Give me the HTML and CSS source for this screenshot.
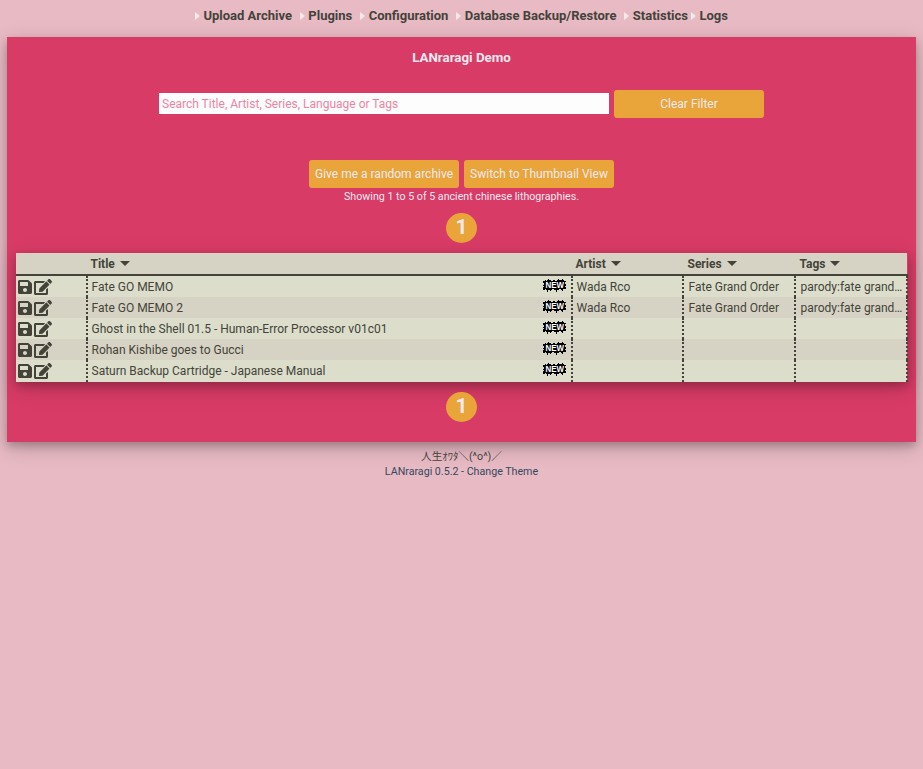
FILE: index.html
```
<!DOCTYPE html>
<html lang="en">
<head>
<meta charset="utf-8">
<title>LANraragi Demo</title>
<link rel="stylesheet" href="styles.css">
</head>
<body>
<svg class="defs" width="0" height="0">
  <symbol id="save" viewBox="0 0 448 512"><path d="M433.941 129.941l-83.882-83.882A48 48 0 0 0 316.118 32H48C21.49 32 0 53.49 0 80v352c0 26.51 21.49 48 48 48h352c26.51 0 48-21.49 48-48V163.882a48 48 0 0 0-14.059-33.941zM224 416c-35.346 0-64-28.654-64-64 0-35.346 28.654-64 64-64s64 28.654 64 64c0 35.346-28.654 64-64 64zm96-304.52V212c0 6.627-5.373 12-12 12H76c-6.627 0-12-5.373-12-12V108c0-6.627 5.373-12 12-12h228.52c3.183 0 6.235 1.264 8.485 3.515l3.48 3.48A11.996 11.996 0 0 1 320 111.48z"/></symbol>
  <symbol id="edit" viewBox="0 0 576 512"><path d="M402.6 83.2l90.2 90.2c3.8 3.8 3.8 10 0 13.8L274.4 405.6l-92.8 10.3c-12.4 1.4-22.9-9.1-21.5-21.5l10.3-92.8L388.8 83.2c3.8-3.8 10-3.8 13.8 0zm162-22.9l-48.8-48.8c-15.2-15.2-39.9-15.2-55.2 0l-35.4 35.4c-3.8 3.8-3.8 10 0 13.8l90.2 90.2c3.8 3.8 10 3.8 13.8 0l35.4-35.4c15.2-15.3 15.2-40 0-55.2zM384 346.2V448H64V128h229.8c3.2 0 6.2-1.3 8.5-3.5l40-40c7.6-7.6 2.2-20.5-8.5-20.5H48C21.5 64 0 85.5 0 112v352c0 26.5 21.5 48 48 48h352c26.5 0 48-21.5 48-48V306.2c0-10.7-12.9-16-20.5-8.5l-40 40c-2.2 2.3-3.5 5.3-3.5 8.5z"/></symbol>
  <symbol id="burst" viewBox="0 0 23 13"><path shape-rendering="crispEdges" d="M0 2H2V1H3V2H4V1H5V0H6V1H8V2H10V1H12V2H14V1H15V0H16V1H19V0H20V1H21V2H23V3H22V5H23V7H22V8H23V10H20V12H19V11H18V10H16V11H14V13H13V11H11V10H9V11H8V12H7V11H5V13H4V11H3V10H2V11H0V8H1V7H0V6H1V4H0Z"/></symbol>
</svg>
<nav class="menu">
  <a>Upload Archive</a><a>Plugins</a><a>Configuration</a><a>Database Backup/Restore</a><a>Statistics</a><a>Logs</a>
</nav>
<main class="panel">
  <h1>LANraragi Demo</h1>
  <div class="search">
    <input type="text" placeholder="Search Title, Artist, Series, Language or Tags">
    <button>Clear Filter</button>
  </div>
  <div class="actions">
    <button>Give me a random archive</button>
    <button>Switch to Thumbnail View</button>
  </div>
  <p class="info">Showing 1 to 5 of 5 ancient chinese lithographies.</p>
  <div class="page">1</div>
  <table>
    <colgroup><col class="c-icons"><col class="c-title"><col class="c-artist"><col class="c-series"><col class="c-tags"></colgroup>
    <thead><tr><th></th><th>Title<i></i></th><th>Artist<i></i></th><th>Series<i></i></th><th>Tags<i></i></th></tr></thead>
    <tbody>
      <tr><td><div class="icons"><svg class="save"><use href="#save"/></svg><svg class="edit"><use href="#edit"/></svg></div></td><td><div class="name">Fate GO MEMO<svg class="new"><use href="#burst" width="23" height="13"/><text x="2.5" y="9" textLength="18.5" lengthAdjust="spacingAndGlyphs">NEW</text></svg></div></td><td>Wada Rco</td><td>Fate Grand Order</td><td>parody:fate grand…</td></tr>
      <tr><td><div class="icons"><svg class="save"><use href="#save"/></svg><svg class="edit"><use href="#edit"/></svg></div></td><td><div class="name">Fate GO MEMO 2<svg class="new"><use href="#burst" width="23" height="13"/><text x="2.5" y="9" textLength="18.5" lengthAdjust="spacingAndGlyphs">NEW</text></svg></div></td><td>Wada Rco</td><td>Fate Grand Order</td><td>parody:fate grand…</td></tr>
      <tr><td><div class="icons"><svg class="save"><use href="#save"/></svg><svg class="edit"><use href="#edit"/></svg></div></td><td><div class="name">Ghost in the Shell 01.5 - Human-Error Processor v01c01<svg class="new"><use href="#burst" width="23" height="13"/><text x="2.5" y="9" textLength="18.5" lengthAdjust="spacingAndGlyphs">NEW</text></svg></div></td><td></td><td></td><td></td></tr>
      <tr><td><div class="icons"><svg class="save"><use href="#save"/></svg><svg class="edit"><use href="#edit"/></svg></div></td><td><div class="name">Rohan Kishibe goes to Gucci<svg class="new"><use href="#burst" width="23" height="13"/><text x="2.5" y="9" textLength="18.5" lengthAdjust="spacingAndGlyphs">NEW</text></svg></div></td><td></td><td></td><td></td></tr>
      <tr><td><div class="icons"><svg class="save"><use href="#save"/></svg><svg class="edit"><use href="#edit"/></svg></div></td><td><div class="name">Saturn Backup Cartridge - Japanese Manual<svg class="new"><use href="#burst" width="23" height="13"/><text x="2.5" y="9" textLength="18.5" lengthAdjust="spacingAndGlyphs">NEW</text></svg></div></td><td></td><td></td><td></td></tr>
    </tbody>
  </table>
  <div class="page">1</div>
</main>
<footer>
  <p>人生ｵﾜﾀ＼(^o^)／</p>
  <p class="version">LANraragi 0.5.2 - Change Theme</p>
</footer>
</body>
</html>
```
FILE: styles.css
```
* { box-sizing: border-box; }
body {
  margin: 0;
  background: #e8bac4;
  color: #43433a;
  font: 12px/15px Roboto, "Noto Sans CJK JP", sans-serif;
}
.defs { position: absolute; }
.menu {
  display: flex;
  align-items: flex-start;
  height: 37px;
  padding: 8px 0 0 195px;
  font-size: 13px;
  font-weight: bold;
  line-height: 16px;
  white-space: nowrap;
}
.menu a { display: flex; align-items: center; margin-right: 8px; }
.menu a:nth-child(5) { margin-right: 3px; }
.menu a::before {
  content: "";
  border: solid transparent;
  border-width: 4px 0 4px 5px;
  border-left-color: #f2e9e9;
  margin-right: 3.4px;
}
.panel {
  width: 909px;
  height: 405px;
  margin: 0 7px;
  padding: 13px 9px 0;
  background: #d83b66;
  color: #f2e9f0;
  box-shadow: 0 4px 8px rgba(0,0,0,.2), 0 6px 20px rgba(0,0,0,.19);
}
h1 { margin: 0 0 25px; font-size: 10pt; line-height: 15px; text-align: center; }
.search, .actions { display: flex; justify-content: center; align-items: center; gap: 5px; height: 28px; }
.search { margin-bottom: 42px; }
input {
  width: 450px;
  height: 21px;
  margin: 0 0 1px;
  border: 0;
  padding: 1px 3px;
  background: #fdfdfd;
  font: 12px Roboto, sans-serif;
}
input::placeholder { color: #f0849f; opacity: 1; }
button {
  width: 150px;
  height: 28px;
  padding: 0;
  border: 0;
  border-radius: 3px;
  background: #e9a43a;
  color: #f2e9f0;
  font: 12px Roboto, sans-serif;
  white-space: nowrap;
}
.info { margin: 1px 0 9px; font-size: 8pt; line-height: 15px; text-align: center; }
.page {
  width: 31px;
  height: 30px;
  margin: 0 auto;
  border-radius: 50%;
  background: #e9a43a;
  font-size: 21px;
  font-weight: bold;
  line-height: 28px;
  text-align: center;
}
table {
  width: 892px;
  margin: 10px 0;
  border-collapse: collapse;
  table-layout: fixed;
  color: #43433a;
  box-shadow: 0 4px 8px rgba(0,0,0,.2), 0 6px 20px rgba(0,0,0,.19);
}
.c-icons { width: 71px; }
.c-title { width: 485px; }
.c-artist { width: 111px; }
.c-series, .c-tags { width: 112px; }
th {
  height: 22px;
  padding: 4px 4px 0;
  background: #d7d3c4;
  text-align: left;
  vertical-align: top;
  line-height: 14px;
  border-bottom: 2px solid #43433a;
}
th i {
  display: inline-block;
  margin-left: 5px;
  border: solid transparent;
  border-width: 5px 5px 0;
  border-top-color: #43433a;
  vertical-align: 2px;
}
th:last-child i { margin-left: 4px; }
td {
  height: 21px;
  padding: 3px 0 0 3.5px;
  border-right: 2px dotted #43433a;
  vertical-align: top;
  line-height: 17px;
  white-space: nowrap;
}
th:nth-child(2), th:nth-child(3) { padding-left: 3.5px; }
th:nth-child(n+4), td:nth-child(n+4) { padding-left: 4.5px; }
tbody tr:first-child td, tbody tr:last-child td { height: 22px; }
td:first-child { padding-left: 1.5px; }
tbody tr:nth-child(odd) td { background: #dcdecb; }
tbody tr:nth-child(even) td { background: #d7d3c4; }
.icons { display: flex; gap: 2px; height: 16px; fill: #43433a; }
.save { width: 14px; height: 16px; }
.edit { width: 18px; height: 16px; }
.name { display: flex; justify-content: space-between; height: 17px; }
.new { width: 23px; height: 13px; margin-right: 5px; overflow: visible; }
.new text { fill: #fff; font: bold 9.5px/10px "Liberation Sans", sans-serif; }
footer { padding-top: 7px; text-align: center; font-size: 8pt; line-height: 15px; }
footer p { margin: 0; }
.version { color: #34495e; }
```
